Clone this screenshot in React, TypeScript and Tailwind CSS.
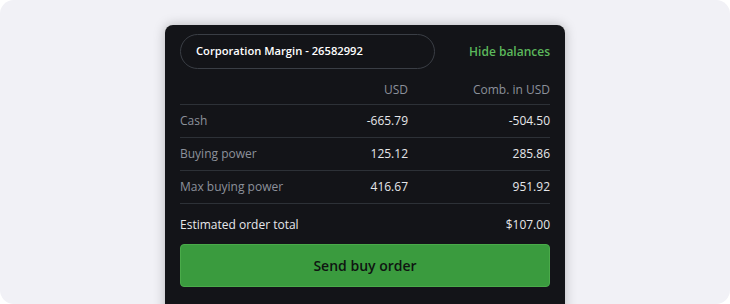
import React from 'react';

const rows = [
    { label: 'Cash', usd: '-665.79', comb: '-504.50' },
    { label: 'Buying power', usd: '125.12', comb: '285.86' },
    { label: 'Max buying power', usd: '416.67', comb: '951.92' },
];

const App: React.FC = () => {
    return (
        <div className="w-[730px] h-[304px] bg-white overflow-hidden" style={{ fontFamily: '"Open Sans", sans-serif' }}>
            <div className="h-full rounded-[14px] bg-[#f1f1f6] flex justify-center pt-[25px]">
                <div className="w-[400px] h-[300px] bg-[#131418] rounded-[8px] shadow-[0_0_12px_rgba(0,0,0,0.25)] px-[15px] pt-[9px]">
                    {/* Account selector */}
                    <div className="flex items-center justify-between">
                        <div className="w-[255px] h-[35px] rounded-full border border-[#3a3e45] flex items-center pl-[15px]">
                            <span className="text-[11.2px] font-semibold text-white">Corporation Margin - 26582992</span>
                        </div>
                        <button className="text-[12px] font-semibold text-[#5cb85c]">Hide balances</button>
                    </div>

                    {/* Balances table */}
                    <div className="mt-[10px]">
                        <div className="grid grid-cols-[1fr_110px_142px] h-[26px] pb-[3px] items-center text-[12px] text-[#8c919b] border-b border-[#2d3137]">
                            <span></span>
                            <span className="text-right">USD</span>
                            <span className="text-right">Comb. in USD</span>
                        </div>
                        {rows.map(row => (
                            <div
                                key={row.label}
                                className="grid grid-cols-[1fr_110px_142px] h-[33px] items-center text-[12px] border-b border-[#2d3137]"
                            >
                                <span className="text-[#8c919b]">{row.label}</span>
                                <span className="text-right text-[#e6e7ea]">{row.usd}</span>
                                <span className="text-right text-[#e6e7ea]">{row.comb}</span>
                            </div>
                        ))}
                    </div>

                    {/* Total */}
                    <div className="flex justify-between items-center h-[40px] pt-[2px] text-[12px] text-[#e6e7ea]">
                        <span>Estimated order total</span>
                        <span>$107.00</span>
                    </div>

                    <button className="w-full h-[43px] rounded-[4px] bg-[#3a9b3e] border border-[#4aab4a] text-[14px] font-semibold text-[#0f1411]">
                        Send buy order
                    </button>
                </div>
            </div>
        </div>
    );
};

export default App;
